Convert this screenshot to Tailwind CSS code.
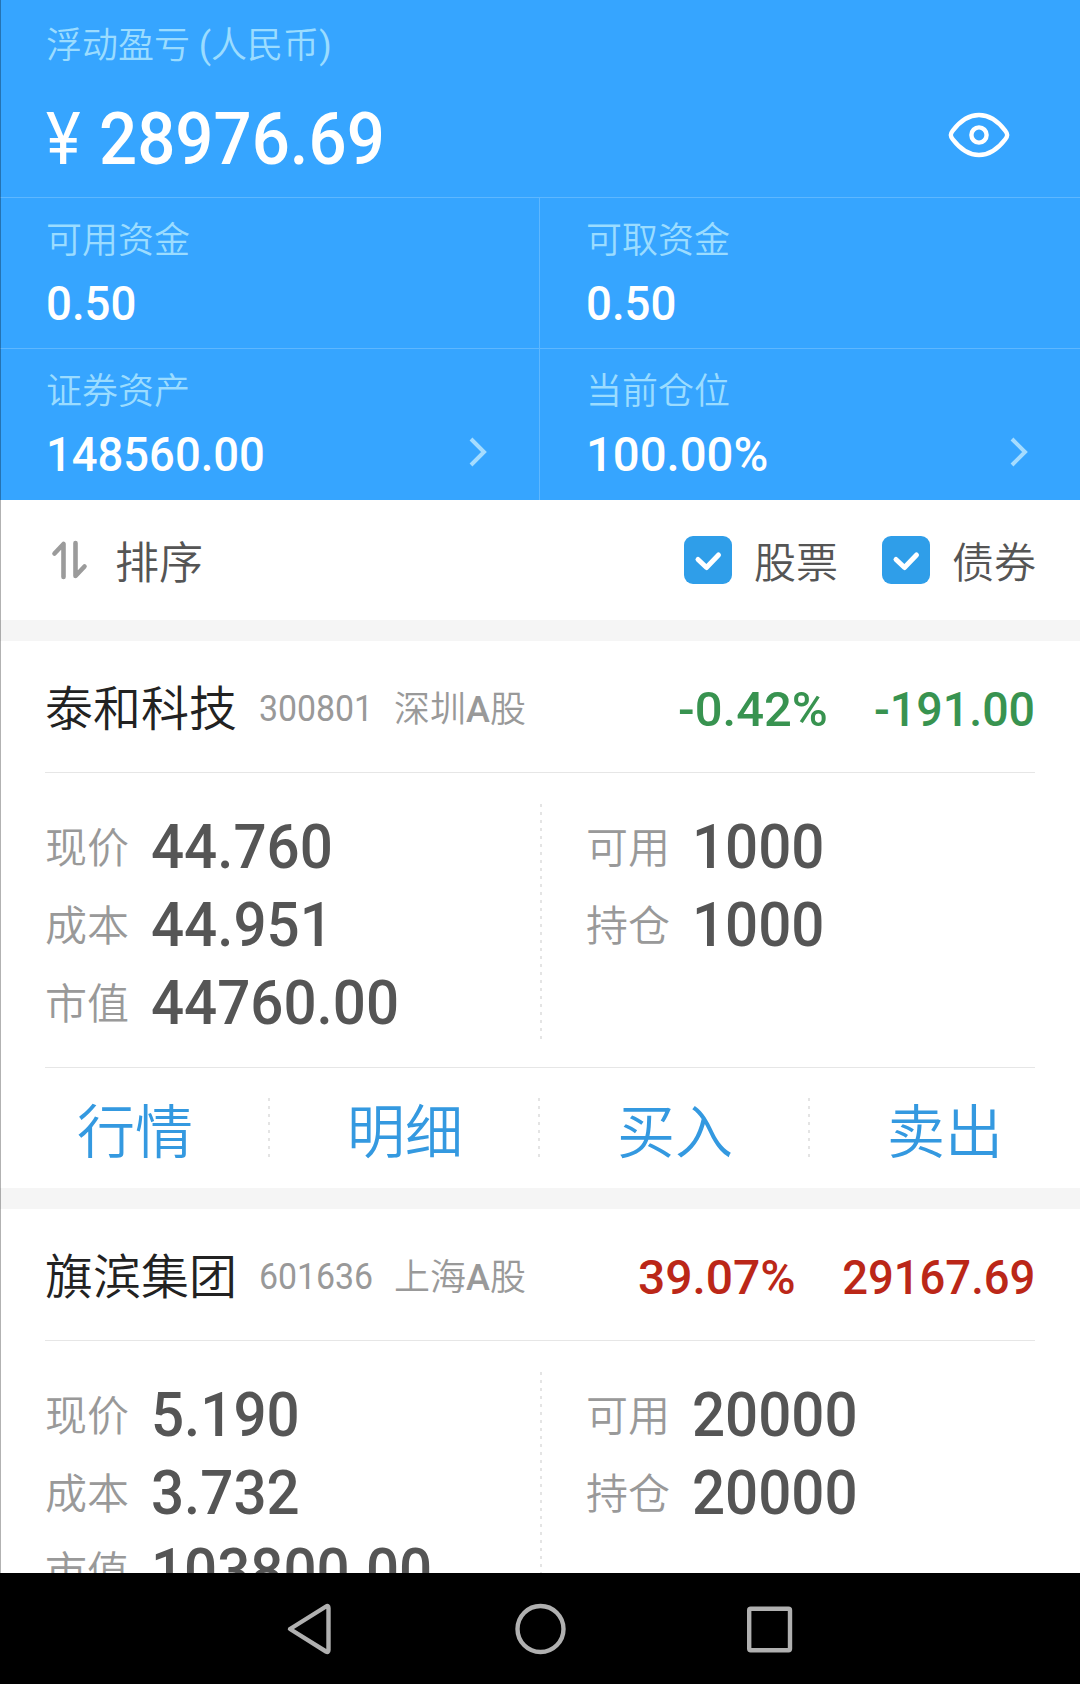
<!DOCTYPE html>
<html lang="zh-CN">
<head>
  <meta charset="UTF-8" />
  <meta name="viewport" content="width=device-width, initial-scale=1.0"/>
  <title>持仓</title>
  <script src="https://cdn.jsdelivr.net/npm/@tailwindcss/browser@4"></script>
</head>
<body class="bg-white font-['Roboto','Noto_Sans_CJK_SC',sans-serif] font-[350]">
  <div class="relative flex flex-col w-[1080px] h-[1684px] overflow-hidden">

    <!-- Account summary -->
    <header class="shrink-0 h-[500px] bg-[#36a5ff] text-white">
      <div class="flex justify-between h-[198px] pl-[46px] pr-[69px] border-b border-white/20">
        <div class="pt-[28px]">
          <p class="text-[36px] leading-[36px] text-[#9bdcff]">浮动盈亏 <span class="font-normal">(</span>人民币<span class="font-normal">)</span></p>
          <div class="flex mt-[39px] text-[73px] leading-[73px]">
            <span class="w-[53px] font-normal origin-left scale-x-90">¥</span>
            <span class="font-medium origin-left scale-x-[.92]">28976.69</span>
          </div>
        </div>
        <svg class="w-[64px] h-[48px] mt-[111px]" viewBox="0 0 64 48" fill="none" stroke="white" stroke-width="4.4">
          <path d="M3.8 24c0-1.600.9-3 2-4.400C12 11.500 21 4 32 4s20 7.500 26.200 15.600c1.100 1.400 2 2.800 2 4.400s-.9 3-2 4.400C52 36.500 43 44 32 44S12 36.500 5.800 28.400c-1.100-1.400-2-2.800-2-4.400z"/>
          <circle cx="32" cy="24" r="7.600"/>
        </svg>
      </div>
      <div id="summary" class="grid grid-cols-2"></div>
    </header>

    <!-- Sort and filter -->
    <div class="shrink-0 flex items-center h-[120px] pl-[50px] pr-[44px] text-[#555]">
      <svg class="w-[40px] h-[40px]" viewBox="0 0 40 40" fill="none" stroke="#9b9b9b" stroke-width="4.600" stroke-linecap="round" stroke-linejoin="round">
        <path d="M4.500 13.500L13.500 4v33M25.500 3v33l9-9.500"/>
      </svg>
      <span class="ml-[25px] text-[44px] leading-[48px] pt-2">排序</span>
      <div class="flex items-center gap-[44px] ml-auto text-[42px] leading-[48px]">
        <label class="flex items-center gap-[22px]">
          <svg class="w-[48px] h-[48px]" viewBox="0 0 48 48"><rect width="48" height="48" rx="9" fill="#2f9ee9"/><path d="M14 23.500l8.500 8L34.500 19" fill="none" stroke="white" stroke-width="5" stroke-linecap="round" stroke-linejoin="round"/></svg>
          <span class="pt-2">股票</span>
        </label>
        <label class="flex items-center gap-[22px]">
          <svg class="w-[48px] h-[48px]" viewBox="0 0 48 48"><rect width="48" height="48" rx="9" fill="#2f9ee9"/><path d="M14 23.500l8.500 8L34.500 19" fill="none" stroke="white" stroke-width="5" stroke-linecap="round" stroke-linejoin="round"/></svg>
          <span class="pt-2">债券</span>
        </label>
      </div>
    </div>

    <!-- Positions -->
    <main id="positions" class="grow min-h-0 overflow-hidden"></main>

    <!-- System navigation -->
    <nav class="shrink-0 relative z-10 flex h-[111px] bg-black">
      <svg class="w-full h-full" viewBox="0 0 1080 111" fill="none" stroke="#b0b0b0" stroke-width="4.400" stroke-linejoin="round">
        <path d="M290 56L326 33.500Q328.500 32 328.500 35V77Q328.500 80 326 78.500z"/>
        <circle cx="540.500" cy="56" r="23"/>
        <rect x="749.200" y="35.700" width="40.800" height="41.600" rx="1.500"/>
      </svg>
    </nav>

    <div class="absolute left-0 top-0 w-px h-[1573px] bg-black/30"></div>
  </div>

  <script>
    const summary = [
      { label: "可用资金", value: "0.50", scale: "scale-x-[.95]" },
      { label: "可取资金", value: "0.50", scale: "scale-x-[.95]" },
      { label: "证券资产", value: "148560.00", scale: "scale-x-[.945]", link: true },
      { label: "当前仓位", value: "100.00%", scale: "scale-x-[.985]", link: true }
    ];

    const positions = [
      {
        name: "泰和科技", code: "300801", market: "深圳",
        rate: "-0.42%", profit: "-191.00", color: "text-[#389350] gap-[41px]",
        rateScale: "scale-x-[1.02]", profitScale: "scale-x-[.97]",
        left: [["现价", "44.760"], ["成本", "44.951"], ["市值", "44760.00"]],
        right: [["可用", "1000"], ["持仓", "1000"]],
        actions: ["行情", "明细", "买入", "卖出"]
      },
      {
        name: "旗滨集团", code: "601636", market: "上海",
        rate: "39.07%", profit: "29167.69", color: "text-[#bb2718] gap-[35px]",
        rateScale: "scale-x-100", profitScale: "scale-x-[.945]",
        left: [["现价", "5.190"], ["成本", "3.732"], ["市值", "103800.00"]],
        right: [["可用", "20000"], ["持仓", "20000"]],
        actions: []
      }
    ];

    const chevron = `
      <svg class="w-[20px] h-[32px]" viewBox="0 0 20 32" fill="none" stroke="#a5dcff" stroke-width="4">
        <path d="M3 3L16 16L3 29"/>
      </svg>`;

    // vertical dotted divider, one dot every 8px
    const dots = (cls) => `<i class="${cls} w-[2px] bg-[repeating-linear-gradient(to_bottom,#e4e4e4_0_3px,transparent_3px_8px)]"></i>`;

    const row = ([label, value]) => `
      <div class="flex items-center h-[78px]">
        <span class="w-[106px] pt-[3px] text-[42px] leading-[42px] text-[#999]">${label}</span>
        <span class="text-[62px] leading-[62px] font-medium text-[#555] origin-left scale-x-[.94]">${value}</span>
      </div>`;

    document.getElementById("summary").innerHTML = summary.map((item, i) => `
      <div class="flex justify-between h-[151px] pl-[46px] pr-[51px] border-white/20 ${i % 2 ? "" : "border-r"} ${i < 2 ? "border-b" : ""}">
        <div class="pt-[25px]">
          <p class="text-[36px] leading-[36px] text-[#9bdcff]">${item.label}</p>
          <p class="mt-[21px] text-[48px] leading-[48px] font-medium origin-left ${item.scale}">${item.value}</p>
        </div>
        ${item.link ? `<div class="pt-[87px]">${chevron}</div>` : ""}
      </div>`).join("");

    document.getElementById("positions").innerHTML = positions.map((p) => `
      <section class="border-t-[21px] border-[#f5f5f5]">
        <div class="flex items-center h-[132px] mx-[45px] pt-[7px] border-b border-[#e6e6e6]">
          <span class="text-[48px] leading-[48px] text-[#222]">${p.name}</span>
          <span class="ml-[22px] -mt-[3px] w-[115px] text-[36px] leading-[36px] font-normal text-[#999] origin-left scale-x-[.94]">${p.code}</span>
          <span class="ml-[20px] text-[36px] leading-[36px] text-[#999]">${p.market}<b class="font-medium">A</b>股</span>
          <div class="flex ml-auto text-[48px] leading-[48px] font-medium ${p.color}">
            <span class="origin-right ${p.rateScale}">${p.rate}</span>
            <span class="origin-right ${p.profitScale}">${p.profit}</span>
          </div>
        </div>
        <div class="relative flex h-[295px] mx-[45px] pt-[35px] border-b border-[#e6e6e6]">
          <div class="w-[541px]">${p.left.map(row).join("")}</div>
          <div>${p.right.map(row).join("")}</div>
          ${dots("absolute left-[495px] top-[31px] h-[235px]")}
        </div>
        <div class="relative grid grid-cols-4 h-[120px] text-[58px] leading-[58px] text-[#3499e0]">
          ${p.actions.map((a, i) => `
            <div class="relative flex items-center justify-center pt-[10px]">
              ${a}${i < 3 ? dots("absolute right-0 top-[30px] h-[60px]") : ""}
            </div>`).join("")}
        </div>
      </section>`).join("");
  </script>
</body>
</html>
